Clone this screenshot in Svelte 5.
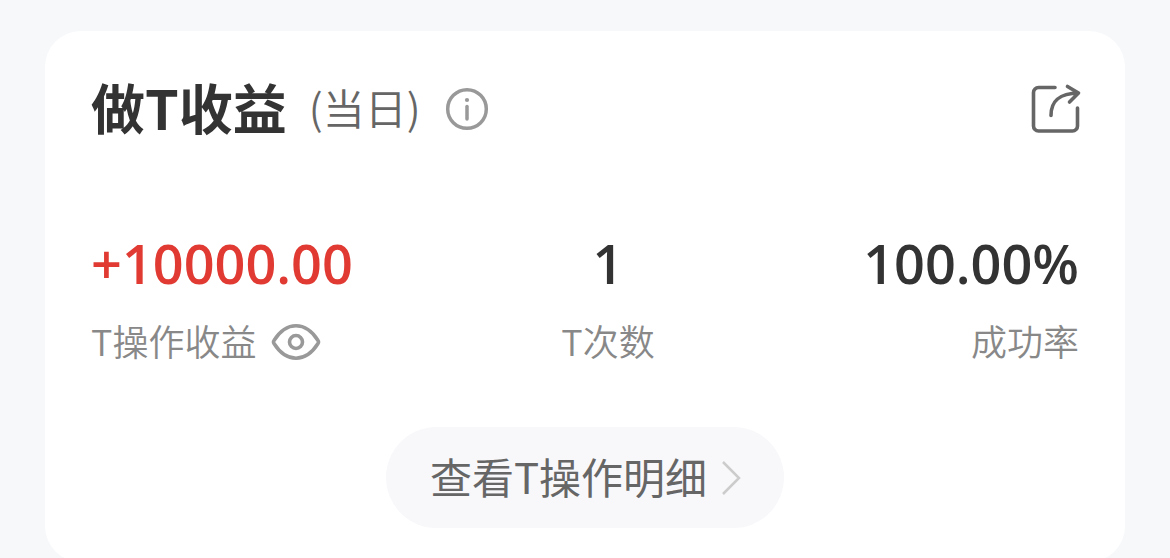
<script>
  const stats = [
    { value: '+10000.00', label: 'T操作收益', gain: true },
    { value: '1', label: 'T次数' },
    { value: '100.00%', label: '成功率' }
  ];
  let hidden = $state(false);
</script>

<main>
  <section class="card">
    <header>
      <h1>做T收益</h1>
      <span class="period">(当日)</span>
      <button class="icon info" aria-label="说明">
        <svg width="44" height="44" viewBox="0 0 44 44" fill="none" stroke="#999" stroke-width="3.5" stroke-linecap="round">
          <circle cx="22" cy="22" r="19.3" />
          <path d="M22 19.500v12.500" />
          <circle cx="22" cy="13" r="2.1" fill="#999" stroke="none" />
        </svg>
      </button>
      <button class="icon share" aria-label="分享">
        <svg width="50" height="50" viewBox="0 0 50 50" fill="none" stroke="#666" stroke-width="3.6" stroke-linecap="round" stroke-linejoin="round">
          <path d="M24 3.500H7.500a5 5 0 0 0-5 5V42a5 5 0 0 0 5 5h34a5 5 0 0 0 5-5V24" />
          <path d="M20 31.500C20 16 29 9.500 47.500 9M36.500 2.500l11 6.500-9 9" />
        </svg>
      </button>
    </header>

    <div class="stats">
      {#each stats as stat}
        <div class="stat">
          <strong class:gain={stat.gain}>{stat.gain && hidden ? '****' : stat.value}</strong>
          <div class="label">
            <span>{stat.label}</span>
            {#if stat.gain}
              <button class="icon eye" aria-label="显示或隐藏收益" onclick={() => (hidden = !hidden)}>
                <svg width="50" height="38" viewBox="0 0 50 38" fill="none" stroke="#999" stroke-width="3.6" stroke-linejoin="round">
                  <path d="M3 20.500Q2 19 3 17.500C9 8 17 2.800 25 2.800S41 8 47 17.500Q48 19 47 20.500C41 30 33 35.200 25 35.200S9 30 3 20.500Z" />
                  <circle cx="25" cy="19" r="6.500" />
                </svg>
              </button>
            {/if}
          </div>
        </div>
      {/each}
    </div>

    <button class="details">
      <span>查看T操作明细</span>
      <svg width="20" height="36" viewBox="0 0 20 36" fill="none" stroke="#ccc" stroke-width="2.5">
        <path d="M2 2l16 16L2 34" />
      </svg>
    </button>
  </section>
</main>

<style>
  :global(body) {
    margin: 0;
    background: #f7f8fa;
  }
  main {
    padding: 31px 45px 0;
    font-family: "Noto Sans CJK SC", sans-serif;
    color: #333;
  }
  .card {
    display: flex;
    flex-direction: column;
    padding: 44px 46px 34px;
    border-radius: 36px;
    background: #fff;
  }
  header {
    display: flex;
    align-items: center;
    height: 68px;
  }
  h1,
  .period {
    align-self: flex-start;
    line-height: 64px;
  }
  h1 {
    margin: 0;
    font-size: 54px;
    font-weight: 700;
  }
  .period {
    margin-left: 22px;
    color: #666;
    font-size: 42px;
    font-weight: 350;
  }
  button {
    border: 0;
    font: inherit;
    cursor: pointer;
  }
  .icon {
    display: flex;
    align-items: center;
    padding: 0;
    background: none;
  }
  .info {
    margin-left: 24px;
  }
  .share {
    margin-left: auto;
    margin-right: -2px;
  }
  .stats {
    display: flex;
    justify-content: space-between;
    margin-top: 84px;
  }
  .stat {
    display: flex;
    flex-direction: column;
    align-items: center;
  }
  .stat:first-child {
    align-items: flex-start;
  }
  .stat:last-child {
    align-items: flex-end;
  }
  strong {
    font-family: "Open Sans", sans-serif;
    font-size: 54px;
    line-height: 72px;
    font-weight: 600;
  }
  .gain {
    color: #e03a32;
  }
  .label {
    display: flex;
    align-items: flex-start;
    gap: 15px;
    height: 52px;
    margin-top: 16px;
    color: #888;
    font-size: 36px;
    line-height: 50px;
    font-weight: 350;
  }
  .eye {
    height: 54px;
  }
  .details {
    display: flex;
    align-items: center;
    align-self: center;
    gap: 14px;
    height: 101px;
    margin-top: 60px;
    padding: 0 43px 0 44px;
    border-radius: 51px;
    background: #f8f8fb;
    color: #666;
    font-size: 42px;
    line-height: 60px;
  }
  .details span {
    padding-bottom: 4px;
  }
</style>
